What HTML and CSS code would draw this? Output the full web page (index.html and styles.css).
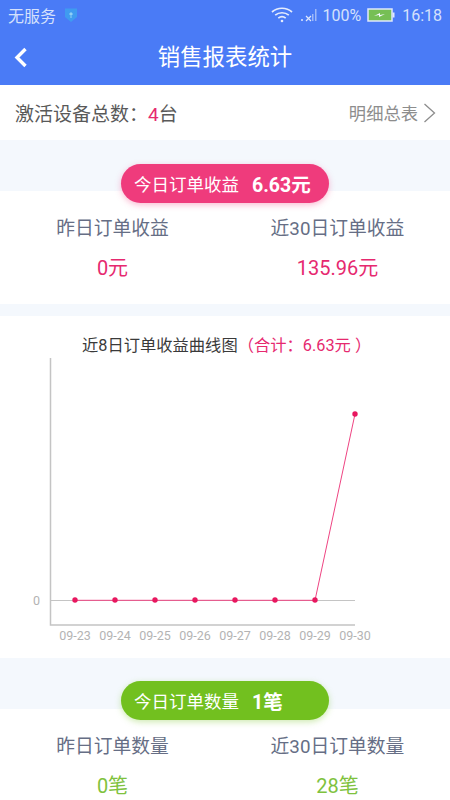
FILE: index.html
```html
<!DOCTYPE html>
<html lang="zh-CN">
<head>
<meta charset="utf-8">
<title>销售报表统计</title>
<link rel="stylesheet" href="styles.css">
</head>
<body>
<div class="top">
  <div class="status">
    <div class="status-left">
      <span>无服务</span>
      <svg class="shield" width="16" height="16" viewBox="0 0 16 16"><path d="M2 1.500h12v8.500l-6 5-6-5z" fill="#3f9bf0"/><path d="M8 5l2 2-2 2-2-2z" fill="#8fd0f5"/><path d="M8 9v2" stroke="#8fd0f5"/></svg>
    </div>
    <div class="status-right">
      <svg class="wifi" width="22" height="17" viewBox="0 0 22 17" fill="none" stroke="#e4ecfd" stroke-width="1.700"><path d="M1 6c5.500-5 14.500-5 20 0"/><path d="M4.200 9.200c3.800-3.300 9.800-3.300 13.600 0"/><path d="M7.300 12.200c2.100-1.700 5.300-1.700 7.400 0"/><circle cx="11" cy="15" r="1.300" fill="#e4ecfd" stroke="none"/></svg>
      <svg class="signal" width="17" height="14" viewBox="0 0 17 14"><rect x="1" y="11" width="2" height="2" fill="#b9ccf9"/><path d="M6 8l5 5M11 8l-5 5" stroke="#dfe8fd" stroke-width="1.200"/><rect x="12" y="6" width="1.500" height="7" fill="#9db8f8"/><rect x="15" y="1" width="1.500" height="12" fill="#9db8f8"/></svg>
      <span class="pct">100%</span>
      <svg class="battery" width="28" height="14" viewBox="0 0 28 14"><rect x="1" y="1" width="24" height="12" fill="#76bf55" stroke="#dfe8fd" stroke-width="1.500"/><rect x="25.500" y="4.500" width="2" height="5" fill="#dfe8fd"/><path d="M7 8l6-3v2l5-1-6 3V7z" fill="#f4f8ff"/></svg>
      <span>16:18</span>
    </div>
  </div>
  <header class="nav">
    <svg class="back" width="14" height="21" viewBox="0 0 14 21" fill="none" stroke="#fff" stroke-width="3.400"><path d="M11.500 2L3 10.500l8.500 8.500"/></svg>
    <h1>销售报表统计</h1>
  </header>
</div>

<div class="device">
  <div class="device-total">激活设备总数：<b>4</b>台</div>
  <div class="device-link">明细总表
    <svg width="13" height="20" viewBox="0 0 13 20" fill="none" stroke="#8d8d8d" stroke-width="1.300"><path d="M1.500 1l10 9-10 9"/></svg>
  </div>
</div>

<div class="band">
  <div class="pill pill-pink"><span>今日订单收益</span><strong>6.63元</strong></div>
</div>
<section class="stats">
  <div class="stat"><div class="stat-label">昨日订单收益</div><div class="stat-value pink">0元</div></div>
  <div class="stat"><div class="stat-label">近30日订单收益</div><div class="stat-value pink">135.96元</div></div>
</section>

<div class="gap"></div>

<section class="chart">
  <h2>近8日订单收益曲线图<span>（合计：6.63元 ）</span></h2>
  <svg class="plot" width="450" height="302" viewBox="0 356 450 302">
    <path d="M50.500 358v267H355" fill="none" stroke="#c4c4c4" stroke-width="1.500"/>
    <path d="M50 600.500h305" stroke="#c4c4c4" stroke-width="1.200"/>
    <path d="M75 600.300H315L355 414" fill="none" stroke="#ee4482" stroke-width="1"/>
    <g fill="#e8175f">
      <circle cx="75" cy="600" r="2.700"/><circle cx="115" cy="600" r="2.700"/><circle cx="155" cy="600" r="2.700"/><circle cx="195" cy="600" r="2.700"/><circle cx="235" cy="600" r="2.700"/><circle cx="275" cy="600" r="2.700"/><circle cx="315" cy="600" r="2.700"/><circle cx="355" cy="414" r="2.700"/>
    </g>
    <g class="tick">
      <text x="36.500" y="605" text-anchor="middle">0</text>
      <text x="75" y="640" text-anchor="middle">09-23</text>
      <text x="115" y="640" text-anchor="middle">09-24</text>
      <text x="155" y="640" text-anchor="middle">09-25</text>
      <text x="195" y="640" text-anchor="middle">09-26</text>
      <text x="235" y="640" text-anchor="middle">09-27</text>
      <text x="275" y="640" text-anchor="middle">09-28</text>
      <text x="315" y="640" text-anchor="middle">09-29</text>
      <text x="355" y="640" text-anchor="middle">09-30</text>
    </g>
  </svg>
</section>

<div class="band band-low">
  <div class="pill pill-green"><span>今日订单数量</span><strong>1笔</strong></div>
</div>
<section class="stats">
  <div class="stat"><div class="stat-label">昨日订单数量</div><div class="stat-value green">0笔</div></div>
  <div class="stat"><div class="stat-label">近30日订单数量</div><div class="stat-value green">28笔</div></div>
</section>
</body>
</html>
```
FILE: styles.css
```css
* { box-sizing: border-box; }
html, body { margin: 0; padding: 0; }
body {
  width: 450px;
  height: 800px;
  overflow: hidden;
  background: #fff;
  font-family: Roboto, "Noto Sans CJK SC", sans-serif;
}
h1, h2 { margin: 0; font-weight: 400; }

.top { background: #4a7bf6; color: #fff; height: 85px; }
.status {
  height: 30px;
  padding: 0 8px;
  display: flex;
  justify-content: space-between;
  align-items: center;
  font-size: 16px;
  color: #d5e1fc;
}
.status-left, .status-right { display: flex; align-items: center; }
.shield { margin-left: 7px; }
.status-right .wifi { margin-right: 7px; margin-top: -1px; }
.status-right .signal { margin-right: 5px; }
.pct { margin-right: 6px; }
.battery { margin-right: 7px; }

.nav {
  height: 55px;
  display: flex;
  align-items: center;
  justify-content: center;
  position: relative;
}
.back { position: absolute; left: 14px; top: 17px; }
.nav h1 { font-size: 22.400px; line-height: 55px; }

.device {
  height: 55px;
  padding: 0 14px 0 15px;
  display: flex;
  justify-content: space-between;
  align-items: center;
}
.device-total { font-size: 19px; color: #595959; }
.device-total b { font-weight: 400; color: #e6296f; }
.device-link {
  display: flex;
  align-items: center;
  gap: 5px;
  font-size: 17.300px;
  color: #8d8d8d;
}

.band { height: 51px; background: #f4f8fd; padding-top: 24px; }
.band-low { padding-top: 23px; }
.pill {
  width: 208px;
  height: 39px;
  margin: 0 auto;
  padding-left: 13px;
  border-radius: 20px;
  display: flex;
  align-items: center;
  gap: 13px;
  color: #fff;
  position: relative;
}
.pill span { font-size: 17.500px; }
.pill strong { font-size: 19.500px; font-weight: 700; }
.pill-pink { background: #ef3b7c; box-shadow: 0 2px 6px rgba(244, 60, 125, 0.35); }
.pill-green { background: #72c01f; box-shadow: 0 2px 6px rgba(114, 195, 31, 0.35); }

.stats {
  height: 113px;
  padding-top: 22px;
  display: grid;
  grid-template-columns: 1fr 1fr;
  text-align: center;
}
.stat-label { font-size: 18.800px; line-height: 32px; color: #666e85; }
.stat-value { font-size: 20px; line-height: 32px; margin-top: 7px; }
.pink { color: #e6296f; }
.green { color: #7fc23e; }

.gap { height: 12px; background: #f4f8fd; }

.chart { height: 342px; padding-top: 20px; }
.chart h2 {
  height: 20px;
  padding-left: 82px;
  font-size: 16.300px;
  line-height: 20px;
  color: #3a3a3a;
  white-space: nowrap;
}
.chart h2 span { color: #e6296f; }
.plot { display: block; }
.tick { font-size: 12.500px; fill: #b3b3b3; }
```
